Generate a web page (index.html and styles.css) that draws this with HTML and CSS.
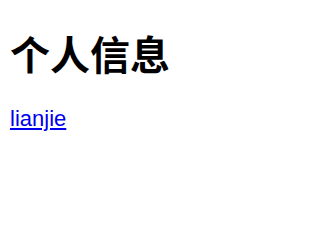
FILE: index.html
```html
<!DOCTYPE html>
<html>
<head>
<meta charset="utf-8">
<link rel="stylesheet" href="styles.css">
</head>
<body>
<h1 class="title">个人信息</h1>
<a class="link" href="#">lianjie</a>
</body>
</html>
```
FILE: styles.css
```css
body {
  margin: 8px 10px;
  font-family: "Liberation Sans", "Noto Sans CJK SC", sans-serif;
}
.title {
  font-size: 40px;
  margin: 20px 0 0;
  line-height: 56px;
}
.link {
  display: inline-block;
  margin-top: 22px;
  font-size: 22px;
  color: #0000ee;
}
```
